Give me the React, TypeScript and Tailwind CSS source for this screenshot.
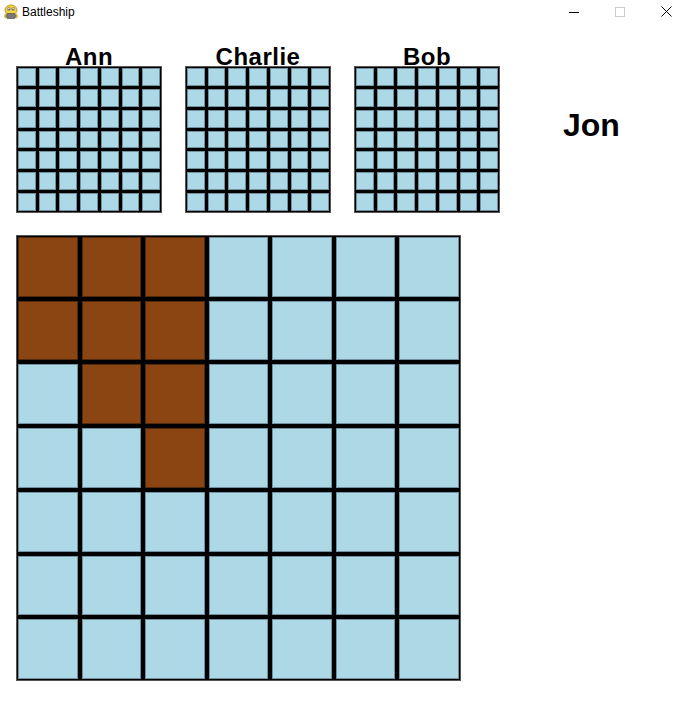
const SHIPS = new Set(["0-0", "0-1", "0-2", "1-0", "1-1", "1-2", "2-1", "2-2", "3-2"]);

const small = ["Ann", "Charlie", "Bob"];

function SmallBoard({ name }: { name: string }) {
  return (
    <div className="flex w-[146px] flex-col items-center">
      <div className="h-[22px] text-[24px] font-bold leading-[26px] tracking-[0.5px] text-black">{name}</div>
      <div className="grid h-[147px] w-[146px] grid-cols-7 grid-rows-7 gap-[3px] border border-[#555] bg-black p-[1px]">
        {Array.from({ length: 49 }).map((_, i) => (
          <div key={i} className="bg-[#add8e6] shadow-[inset_0_0_0_1px_rgba(40,60,70,0.45)]" />
        ))}
      </div>
    </div>
  );
}

function BigBoard() {
  const cells = [];
  for (let r = 0; r < 7; r++) {
    for (let c = 0; c < 7; c++) {
      const ship = SHIPS.has(`${r}-${c}`);
      cells.push(
        <div
          key={`${r}-${c}`}
          className={
            ship
              ? "bg-[#8b4513] shadow-[inset_0_0_0_1px_rgba(40,20,10,0.55)]"
              : "bg-[#add8e6] shadow-[inset_0_0_0_1px_rgba(40,60,70,0.45)]"
          }
        />
      );
    }
  }
  return (
    <div className="grid h-[446px] w-[445px] grid-cols-7 grid-rows-7 gap-[4px] border border-[#555] bg-black p-[1px]">
      {cells}
    </div>
  );
}

function TitleBar() {
  return (
    <div className="flex h-[23px] items-center bg-white">
      <svg width="16" height="16" viewBox="0 0 16 16" className="ml-[3px]">
        <ellipse cx="8" cy="6" rx="6" ry="5" fill="#f5d43c" stroke="#a88a1c" strokeWidth="0.8" />
        <circle cx="5.8" cy="5" r="1.6" fill="#fff" stroke="#555" strokeWidth="0.5" />
        <circle cx="10.2" cy="5" r="1.6" fill="#fff" stroke="#555" strokeWidth="0.5" />
        <circle cx="6" cy="5.2" r="0.7" fill="#222" />
        <circle cx="10" cy="5.2" r="0.7" fill="#222" />
        <rect x="3.5" y="9.5" width="9" height="5" rx="1.5" fill="#777" stroke="#444" strokeWidth="0.6" />
        <path d="M3 10 Q1 12 3 14" stroke="#d4b02a" strokeWidth="1.6" fill="none" />
        <path d="M13 10 Q15 12 13 14" stroke="#d4b02a" strokeWidth="1.6" fill="none" />
      </svg>
      <span className="ml-[3px] text-[12px] text-black">Battleship</span>
      <div className="ml-auto flex h-full items-center">
        <div className="flex w-[46px] justify-center">
          <svg width="10" height="10" viewBox="0 0 10 10">
            <path d="M0 5.5 H10" stroke="#000" strokeWidth="1" />
          </svg>
        </div>
        <div className="flex w-[46px] justify-center">
          <svg width="10" height="10" viewBox="0 0 10 10">
            <rect x="0.5" y="0.5" width="9" height="9" fill="none" stroke="#ccc" strokeWidth="1" />
          </svg>
        </div>
        <div className="flex w-[46px] justify-center">
          <svg width="11" height="11" viewBox="0 0 11 11">
            <path d="M0.5 0.5 L10.5 10.5 M10.5 0.5 L0.5 10.5" stroke="#000" strokeWidth="1" />
          </svg>
        </div>
      </div>
    </div>
  );
}

export default function App() {
  return (
    <div className="h-[720px] w-[689px] overflow-hidden bg-white font-['Liberation_Sans',Arial,sans-serif]">
      <TitleBar />
      <div className="pl-[16px] pt-[21px]">
        <div className="flex items-start gap-[23px]">
          {small.map((n) => (
            <SmallBoard key={n} name={n} />
          ))}
          <div className="ml-[40px] mt-[65px] text-[32px] font-bold leading-none text-black">Jon</div>
        </div>
        <div className="mt-[22px]">
          <BigBoard />
        </div>
      </div>
    </div>
  );
}
